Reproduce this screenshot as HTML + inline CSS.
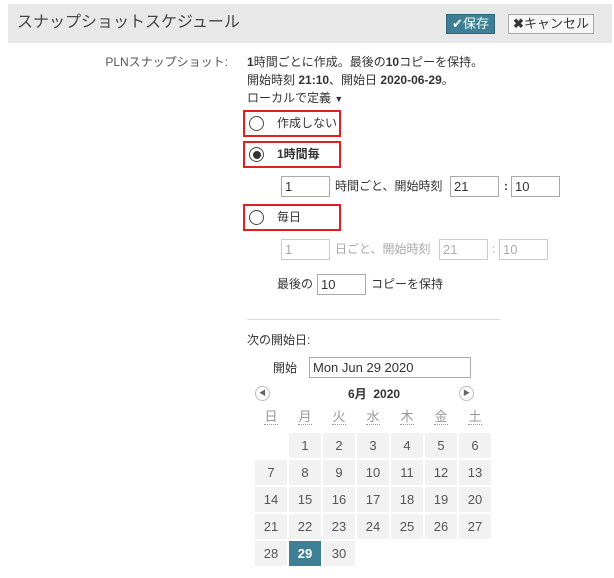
<!DOCTYPE html>
<html><head><meta charset="utf-8"><style>
body{margin:0;width:614px;height:578px;background:#fff;font-family:"Liberation Sans","Noto Sans CJK JP",sans-serif;font-size:12px;line-height:16px;color:#333;position:relative;overflow:hidden}
.a{position:absolute;white-space:nowrap}
.hdr{position:absolute;left:8px;top:4px;width:604px;height:39px;background:#e8e8e8}
.inp{position:absolute;border:1px solid #aaa;box-sizing:border-box;height:21px;font-size:13px;padding-left:3px;line-height:19px;background:#fff}
.dis{border-color:#ccc;color:#aaa}
.box{position:absolute;left:243px;width:98px;height:27px;border:2px solid #e02020;box-sizing:border-box}
.rad{position:absolute;left:4px;top:4px;width:15px;height:15px;border:1px solid #444;border-radius:50%;box-sizing:border-box}
.lbl{position:absolute;left:32px;top:0;line-height:23px}
.cell{position:absolute;width:32px;height:25px;background:#f2f2f2;text-align:center;line-height:25px;font-size:13px;color:#555}
.wd{position:absolute;width:32px;text-align:center;font-size:13px;color:#999;top:409px}
.wd span{border-bottom:1px dotted #999}
</style></head><body>
<div class="hdr"></div>
<div class="a" style="left:17px;top:13px;font-size:16px;line-height:20px;color:#444">スナップショットスケジュール</div>
<div class="a" style="left:446px;top:14px;width:49px;height:20px;background:#3e7f96;border:1px solid #2d6478;box-sizing:border-box;color:#fff;font-size:13px;line-height:18px;text-align:center">✔保存</div>
<div class="a" style="left:508px;top:14px;width:86px;height:20px;background:#f7f7f7;border:1px solid #aaa;box-sizing:border-box;color:#333;font-size:13px;line-height:18px;text-align:center"><b>✖</b>キャンセル</div>
<div class="a" style="left:100px;top:54px;width:128px;text-align:right;color:#555">PLNスナップショット:</div>
<div class="a" style="left:247px;top:54px"><b>1</b>時間ごとに作成。最後の<b>10</b>コピーを保持。</div>
<div class="a" style="left:247px;top:72px">開始時刻 <b>21:10</b>、開始日 <b>2020-06-29</b>。</div>
<div class="a" style="left:247px;top:90px">ローカルで定義 <span style="font-size:9px">▼</span></div>
<div class="box" style="top:110px"><div class="rad"></div><div class="lbl">作成しない</div></div>
<div class="box" style="top:141px"><div class="rad"><div style="position:absolute;left:2.5px;top:2.5px;width:8px;height:8px;border-radius:50%;background:#333"></div></div><div class="lbl" style="font-weight:bold">1時間毎</div></div>
<div class="inp" style="left:281px;top:176px;width:49px">1</div>
<div class="a" style="left:335px;top:178px">時間ごと、開始時刻</div>
<div class="inp" style="left:450px;top:176px;width:49px">21</div>
<div class="a" style="left:504px;top:178px;font-weight:bold">:</div>
<div class="inp" style="left:511px;top:176px;width:49px">10</div>
<div class="box" style="top:204px"><div class="rad"></div><div class="lbl">毎日</div></div>
<div class="inp dis" style="left:281px;top:239px;width:49px">1</div>
<div class="a" style="left:335px;top:241px;color:#aaa">日ごと、開始時刻</div>
<div class="inp dis" style="left:439px;top:239px;width:49px">21</div>
<div class="a" style="left:492px;top:241px;color:#aaa">:</div>
<div class="inp dis" style="left:499px;top:239px;width:49px">10</div>
<div class="a" style="left:277px;top:276px">最後の</div>
<div class="inp" style="left:317px;top:274px;width:49px">10</div>
<div class="a" style="left:371px;top:276px">コピーを保持</div>
<div class="a" style="left:247px;top:319px;width:253px;height:1px;background:#ddd"></div>
<div class="a" style="left:247px;top:332px">次の開始日:</div>
<div class="a" style="left:273px;top:360px">開始</div>
<div class="inp" style="left:309px;top:357px;width:162px;font-size:13px">Mon Jun 29 2020</div>
<div class="a" style="left:255px;top:386px;width:13px;height:13px;border:1px solid #bbb;border-radius:50%;font-size:7px;line-height:13px;text-align:center;color:#666">◀</div>
<div class="a" style="left:459px;top:386px;width:13px;height:13px;border:1px solid #bbb;border-radius:50%;font-size:7px;line-height:13px;text-align:center;color:#666">▶</div>
<div class="a" style="left:348px;top:386px;font-weight:bold">6月 &nbsp;2020</div>
<div class="wd" style="left:255px"><span>日</span></div><div class="wd" style="left:289px"><span>月</span></div><div class="wd" style="left:323px"><span>火</span></div><div class="wd" style="left:357px"><span>水</span></div><div class="wd" style="left:391px"><span>木</span></div><div class="wd" style="left:425px"><span>金</span></div><div class="wd" style="left:459px"><span>土</span></div>
<div id="cal"></div>
<script>
var h='';for(var d=1;d<=30;d++){var i=d;var c=i%7,r=Math.floor(i/7);var st='left:'+(255+c*34)+'px;top:'+(433+r*27)+'px';if(d==29)st+=';background:#3e7f96;color:#fff;font-weight:bold';h+='<div class="cell" style="'+st+'">'+d+'</div>';}document.getElementById('cal').innerHTML=h;
</script>
</body></html>
